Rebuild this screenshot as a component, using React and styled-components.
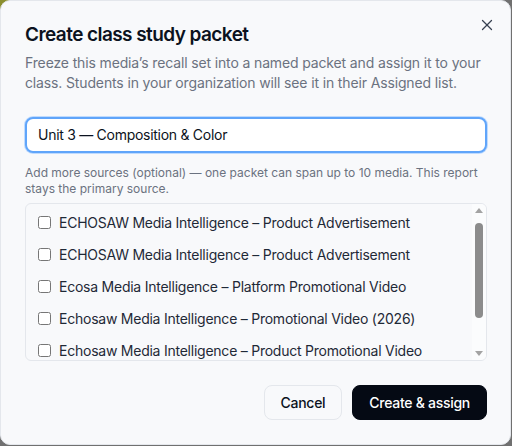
import styled, { createGlobalStyle } from "styled-components";
import { X } from "lucide-react";

const GlobalStyle = createGlobalStyle`
  html, body {
    margin: 0;
    padding: 0;
    height: 100%;
  }
  body {
    background: radial-gradient(circle at 0 0, #8c8f2e 0, #8c8f2e 14px, #707070 40px);
    font-family: Inter, "Noto Sans", sans-serif;
    letter-spacing: -0.015em;
    overflow: hidden;
  }
`;

const Dialog = styled.div`
  position: relative;
  box-sizing: border-box;
  width: 511px;
  height: 445px;
  background: #f8f9fb;
  border: 1px solid #e4e7ec;
  border-radius: 10px;
  padding: 20px 23px 24px 24px;
  display: flex;
  flex-direction: column;
`;

const CloseButton = styled.button`
  position: absolute;
  top: 15px;
  right: 14px;
  border: none;
  background: none;
  padding: 0;
  color: #374151;
  display: flex;
  cursor: pointer;
`;

const Title = styled.h2`
  margin: 0;
  font-size: 19px;
  font-weight: 600;
  color: #0b1220;
  line-height: 28px;
  letter-spacing: -0.03em;
`;

const Description = styled.p`
  margin: 4px 0 0;
  font-size: 14px;
  line-height: 20px;
  color: #6b7280;
  letter-spacing: -0.01em;
`;

const NameInput = styled.input`
  margin-top: 24px;
  box-sizing: border-box;
  width: 100%;
  height: 36px;
  padding: 0 11px;
  border: 2px solid #60a5fa;
  border-radius: 8px;
  box-shadow: 0 0 0 1px #bfdbfe;
  background: #fff;
  font-family: inherit;
  letter-spacing: -0.02em;
  font-size: 14px;
  color: #0b1220;
  outline: none;
`;

const Hint = styled.p`
  margin: 12px 0 0;
  font-size: 12px;
  line-height: 16px;
  color: #6b7280;
  letter-spacing: 0;
`;

const ListBox = styled.div`
  margin-top: 6px;
  box-sizing: border-box;
  height: 160px;
  border: 1px solid #e4e7ec;
  border-radius: 6px;
  display: flex;
  overflow: hidden;
`;

const Rows = styled.div`
  flex: 1;
  overflow: hidden;
  padding: 3px 0;
`;

const SourceRow = styled.label`
  display: flex;
  align-items: center;
  gap: 8px;
  height: 32px;
  flex-shrink: 0;
  padding: 0 12px;
  font-size: 14px;
  color: #1f2937;
  white-space: nowrap;

  input {
    margin: 0;
    width: 13px;
    height: 13px;
  }
`;

const ScrollBar = styled.div`
  width: 14px;
  display: flex;
  flex-direction: column;
  align-items: center;
  background: #fbfcfd;
`;

const ScrollArrow = styled.div`
  height: 14px;
  display: flex;
  align-items: center;
  justify-content: center;
`;

const ScrollTrack = styled.div`
  flex: 1;
  padding-top: 5px;
`;

const Thumb = styled.div`
  width: 8px;
  height: 95px;
  border-radius: 4px;
  background: #8c8c8c;
`;

const Footer = styled.div`
  margin-top: 24px;
  display: flex;
  justify-content: flex-end;
  gap: 10px;
`;

const Button = styled.button`
  height: 35px;
  padding: 0 16px;
  border-radius: 8px;
  font-family: inherit;
  letter-spacing: -0.02em;
  font-size: 14px;
  font-weight: 500;
  cursor: pointer;
  border: 1px solid ${({ $primary }) => ($primary ? "#050a14" : "#e4e7ec")};
  background: ${({ $primary }) => ($primary ? "#050a14" : "#f8f9fb")};
  color: ${({ $primary }) => ($primary ? "#fff" : "#0b1220")};
`;

const sources = [
  "ECHOSAW Media Intelligence – Product Advertisement",
  "ECHOSAW Media Intelligence – Product Advertisement",
  "Ecosa Media Intelligence – Platform Promotional Video",
  "Echosaw Media Intelligence – Promotional Video (2026)",
  "Echosaw Media Intelligence – Product Promotional Video",
];

function Arrow({ down }) {
  return (
    <svg width="8" height="5" viewBox="0 0 8 5">
      <polygon points={down ? "0,0 8,0 4,5" : "0,5 8,5 4,0"} fill="#a3a3a3" />
    </svg>
  );
}

export default function App() {
  return (
    <>
      <GlobalStyle />
      <Dialog>
        <CloseButton aria-label="Close">
          <X size={18} strokeWidth={1.7} />
        </CloseButton>
        <Title>Create class study packet</Title>
        <Description>
          Freeze this media’s recall set into a named packet and assign it to your
          class. Students in your organization will see it in their Assigned list.
        </Description>
        <NameInput defaultValue="Unit 3 — Composition & Color" />
        <Hint>
          Add more sources (optional) — one packet can span up to 10 media. This report
          stays the primary source.
        </Hint>
        <ListBox>
          <Rows>
            {sources.map((name, i) => (
              <SourceRow key={i}>
                <input type="checkbox" />
                {name}
              </SourceRow>
            ))}
          </Rows>
          <ScrollBar>
            <ScrollArrow>
              <Arrow />
            </ScrollArrow>
            <ScrollTrack>
              <Thumb />
            </ScrollTrack>
            <ScrollArrow>
              <Arrow down />
            </ScrollArrow>
          </ScrollBar>
        </ListBox>
        <Footer>
          <Button>Cancel</Button>
          <Button $primary>Create &amp; assign</Button>
        </Footer>
      </Dialog>
    </>
  );
}
